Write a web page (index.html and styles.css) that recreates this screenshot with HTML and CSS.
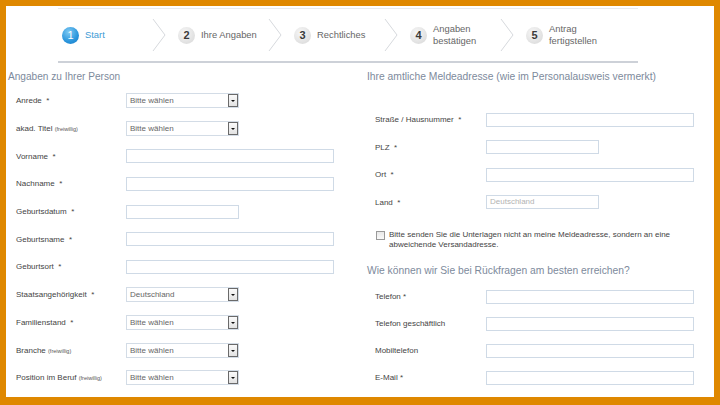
FILE: index.html
```html
<!DOCTYPE html>
<html lang="de">
<head>
<meta charset="UTF-8">
<meta name="viewport" content="width=device-width, initial-scale=1.0">
<title>Antrag - Ihre Angaben</title>
<link rel="stylesheet" href="styles.css">
</head>
<body>
<div class="frame">

  <div class="steps">
    <div class="step active">
      <span class="num">1</span><span class="step-text">Start</span>
      <svg class="chev" width="14" height="32" viewBox="0 0 14 32"><polyline points="1,0 13,16 1,32" fill="none" stroke="#d6d9dd" stroke-width="1"/></svg>
    </div>
    <div class="step">
      <span class="num">2</span><span class="step-text">Ihre Angaben</span>
      <svg class="chev" width="14" height="32" viewBox="0 0 14 32"><polyline points="1,0 13,16 1,32" fill="none" stroke="#d6d9dd" stroke-width="1"/></svg>
    </div>
    <div class="step">
      <span class="num">3</span><span class="step-text">Rechtliches</span>
      <svg class="chev" width="14" height="32" viewBox="0 0 14 32"><polyline points="1,0 13,16 1,32" fill="none" stroke="#d6d9dd" stroke-width="1"/></svg>
    </div>
    <div class="step">
      <span class="num">4</span><span class="step-text">Angaben<br>bestätigen</span>
      <svg class="chev" width="14" height="32" viewBox="0 0 14 32"><polyline points="1,0 13,16 1,32" fill="none" stroke="#d6d9dd" stroke-width="1"/></svg>
    </div>
    <div class="step">
      <span class="num">5</span><span class="step-text">Antrag<br>fertigstellen</span>
    </div>
  </div>

  <div class="columns">
    <div class="col-left">
      <h3 class="section-title">Angaben zu Ihrer Person</h3>
      <div class="row"><label>Anrede &nbsp;*</label><div class="select"><span>Bitte wählen</span><i class="arrow"></i></div></div>
      <div class="row"><label>akad. Titel <small>(freiwillig)</small></label><div class="select"><span>Bitte wählen</span><i class="arrow"></i></div></div>
      <div class="row"><label>Vorname &nbsp;*</label><div class="input"></div></div>
      <div class="row"><label>Nachname &nbsp;*</label><div class="input"></div></div>
      <div class="row"><label>Geburtsdatum &nbsp;*</label><div class="input short"></div></div>
      <div class="row"><label>Geburtsname &nbsp;*</label><div class="input"></div></div>
      <div class="row"><label>Geburtsort &nbsp;*</label><div class="input"></div></div>
      <div class="row"><label>Staatsangehörigkeit &nbsp;*</label><div class="select"><span>Deutschland</span><i class="arrow"></i></div></div>
      <div class="row"><label>Familienstand &nbsp;*</label><div class="select"><span>Bitte wählen</span><i class="arrow"></i></div></div>
      <div class="row"><label>Branche <small>(freiwillig)</small></label><div class="select"><span>Bitte wählen</span><i class="arrow"></i></div></div>
      <div class="row"><label>Position im Beruf <small>(freiwillig)</small></label><div class="select"><span>Bitte wählen</span><i class="arrow"></i></div></div>
    </div>

    <div class="col-right">
      <h3 class="section-title addr-title">Ihre amtliche Meldeadresse (wie im Personalausweis vermerkt)</h3>
      <div class="row"><label>Straße / Hausnummer &nbsp;*</label><div class="input"></div></div>
      <div class="row"><label>PLZ &nbsp;*</label><div class="input short"></div></div>
      <div class="row"><label>Ort &nbsp;*</label><div class="input"></div></div>
      <div class="row"><label>Land &nbsp;*</label><div class="input short disabled">Deutschland</div></div>

      <div class="check">
        <span class="box"></span>
        <p>Bitte senden Sie die Unterlagen nicht an meine Meldeadresse, sondern an eine abweichende Versandadresse.</p>
      </div>

      <h3 class="section-title contact-title">Wie können wir Sie bei Rückfragen am besten erreichen?</h3>
      <div class="row tight"><label>Telefon *</label><div class="input"></div></div>
      <div class="row tight"><label>Telefon geschäftlich</label><div class="input"></div></div>
      <div class="row tight"><label>Mobiltelefon</label><div class="input"></div></div>
      <div class="row tight"><label>E-Mail *</label><div class="input"></div></div>
    </div>
  </div>

</div>
</body>
</html>
```

FILE: styles.css
```css
body {
  margin: 0;
  font-family: 'Liberation Sans', Arial, sans-serif;
  color: #333;
}

.frame {
  box-sizing: border-box;
  width: 720px;
  height: 405px;
  border: solid #df8800;
  border-width: 6px 6px 8px 6px;
  background: #fff;
  overflow: hidden;
}

/* Schritte */
.steps {
  display: flex;
  align-items: center;
  box-sizing: border-box;
  width: 580px;
  height: 55px;
  margin: 2px 0 0 52px;
  padding-left: 4px;
  border-top: 1px solid #e8eaee;
  border-bottom: 2px solid #cdd1d8;
}

.step {
  display: flex;
  align-items: center;
  width: 116px;
  flex-shrink: 0;
}

.num {
  width: 17px;
  height: 17px;
  border-radius: 50%;
  flex-shrink: 0;
  background: radial-gradient(circle at 40% 35%, #f7f7f7, #dedede 75%, #d2d2d2);
  color: #3a3a3a;
  font-size: 11px;
  font-weight: bold;
  line-height: 17px;
  text-align: center;
}

.step-text {
  margin-left: 6px;
  font-size: 9.4px;
  line-height: 12px;
  color: #666;
}

.step.active .num {
  background: radial-gradient(circle at 40% 30%, #7fcaf3, #2a95dc 60%, #1479c4);
  color: #fff;
  font-weight: normal;
}

.step.active .step-text {
  color: #3d9bd5;
}

.chev {
  margin-left: auto;
  margin-right: 12px;
}

/* Formular */
.columns {
  display: grid;
  grid-template-columns: 361px 1fr;
}

.section-title {
  margin: 0;
  font-size: 10.3px;
  line-height: 14px;
  font-weight: normal;
  color: #7d8a9c;
}

.col-left .section-title {
  margin: 7px 0 3px 2px;
  font-size: 10.1px;
}

.addr-title {
  margin: 7px 0 22px 0;
}

.row {
  display: flex;
  align-items: center;
  height: 27.7px;
}

.col-left .row label {
  margin-left: 10px;
}

.col-right .row {
  height: 27.5px;
}

.col-right .row label {
  margin-left: 8px;
  width: 111px;
}

.col-right .row.tight {
  height: 27px;
}

label {
  width: 110px;
  flex-shrink: 0;
  font-size: 8px;
  color: #444;
}

label small {
  font-size: 5.5px;
  color: #555;
}

.input {
  box-sizing: border-box;
  width: 208px;
  height: 14px;
  border: 1px solid #cfdae6;
  background: #fff;
}

.input.short {
  width: 113px;
}

.input.disabled {
  padding-left: 3px;
  font-size: 8px;
  line-height: 12px;
  color: #b3b3b3;
}

.select {
  box-sizing: border-box;
  display: flex;
  align-items: center;
  width: 113px;
  height: 15px;
  border: 1px solid #d3dce6;
  background: #fff;
  font-size: 8px;
  color: #666;
}

.select span {
  padding-left: 3px;
  flex: 1;
}

.arrow {
  box-sizing: border-box;
  position: relative;
  width: 10px;
  height: 13px;
  border: 1px solid #6a6a6a;
  background: linear-gradient(#fafafa, #e2e2e2);
}

.arrow::after {
  content: "";
  position: absolute;
  left: 2px;
  top: 5px;
  border-left: 2px solid transparent;
  border-right: 2px solid transparent;
  border-top: 2px solid #111;
}

.check {
  display: flex;
  align-items: flex-start;
  margin: 14px 0 0 9px;
}

.check .box {
  box-sizing: border-box;
  width: 9px;
  height: 9px;
  margin-top: 1px;
  flex-shrink: 0;
  border: 1px solid #9a9a9a;
  background: linear-gradient(#e8e8e8, #fafafa);
}

.check p {
  margin: 0 0 0 4px;
  width: 300px;
  font-size: 8px;
  line-height: 10px;
  color: #444;
}

.contact-title {
  margin: 14px 0 5px 0;
}
```
